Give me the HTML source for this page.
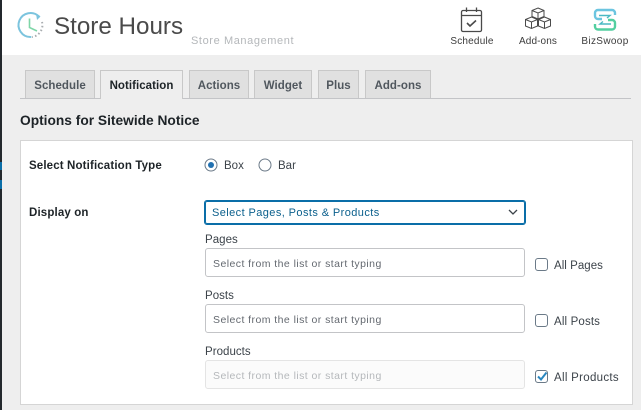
<!DOCTYPE html>
<html><head><meta charset="utf-8">
<style>
html,body{margin:0;padding:0}
body{width:641px;height:410px;overflow:hidden;position:relative;background:#eeeeee;font-family:"Liberation Sans",sans-serif;color:#3c434a}
.a{position:absolute;white-space:nowrap}
.tab{position:absolute;top:70px;height:28px;box-sizing:border-box;border:1px solid #c8c8c8;border-bottom:none;background:#e0e0e0;font-size:11.5px;font-weight:bold;color:#50575e;text-align:center;line-height:30px;letter-spacing:.05px}
.tab.on{background:#eeeeee;color:#1d2327;height:29px;z-index:2}
.lb{font-size:11.5px;font-weight:bold;color:#1d2327;letter-spacing:.14px}
.t{font-size:11.5px;color:#3c434a}
.in{position:absolute;left:205px;width:320px;height:29px;box-sizing:border-box;border:1px solid #c3c4c7;border-radius:3px;background:#fff;font-size:10.5px;color:#646970;line-height:30px;padding-left:7px;letter-spacing:.44px}
.cb{position:absolute;left:535px;width:13px;height:13px;box-sizing:border-box;border:1px solid #6b7a88;border-radius:3px;background:#fff}
.s{font-size:11.500px;line-height:14px;letter-spacing:.04px}
</style></head><body>
<div class="a" style="left:0;top:0;width:2px;height:410px;background:#23282d"></div>
<div class="a" style="left:0;top:162px;width:2px;height:8px;background:#0a6ea8"></div>
<div class="a" style="left:0;top:180px;width:2px;height:9px;background:#0a6ea8"></div>
<div class="a" style="left:2px;top:0;width:639px;height:55px;background:#fff"></div>

<svg class="a" style="left:15px;top:10px" width="30" height="32" viewBox="0 0 30 32" fill="none">
<path d="M24 6.500A12 12 0 1 0 15.500 27" stroke="#7cc4de" stroke-width="2" stroke-linecap="round"/>
<path d="M21 3.500l4.500 3-3.500 3.500z" fill="#7cc4de"/>
<path d="M27 12A12 12 0 0 1 17 27" stroke="#a9adb0" stroke-width="2" stroke-dasharray="1.500 2.400"/>
<path d="M14.500 8.500V17.500L22 21" stroke="#7fd6a8" stroke-width="1.600"/>
</svg>
<div class="a" style="left:54px;top:10px;font-size:24.200px;line-height:34px;color:#4a4a4a">Store Hours</div>
<div class="a" style="left:191px;top:34px;font-size:11px;line-height:14px;color:#b4b7ba;letter-spacing:.6px">Store Management</div>

<svg class="a" style="left:459px;top:6px" width="26" height="28" viewBox="0 0 26 28" fill="none" stroke="#4a4a4a">
<rect x="2.500" y="4.500" width="20" height="21" rx="1.500" stroke-width="1.300"/>
<path d="M2.500 9.500H22.500M7.500 1.500V6M17.500 1.500V6" stroke-width="1.300"/>
<path d="M8 17l3 3 6-5.500" stroke-width="1.600"/>
</svg>
<div class="a" style="left:450px;top:35px;width:44px;text-align:center;font-size:10px;line-height:13px;color:#3c3c3c;letter-spacing:.2px">Schedule</div>

<svg class="a" style="left:523px;top:6px" width="30" height="26" viewBox="0 0 30 26" fill="none" stroke="#4a4a4a" stroke-width="1">
<path d="M15 2l6 2.500v6L15 13l-6-2.500v-6zM9 4.500l6 2.500 6-2.500M15 7v6"/>
<path d="M8.500 11l6 2.500v6.500l-6 2.500-6-2.500v-6.500zM2.500 13.500l6 2.500 6-2.500M8.500 16v6.500"/>
<path d="M21.500 11l6 2.500v6.500l-6 2.500-6-2.500v-6.500zM15.500 13.500l6 2.500 6-2.500M21.500 16v6.500"/>
</svg>
<div class="a" style="left:517px;top:35px;width:42px;text-align:center;font-size:10px;line-height:13px;color:#3c3c3c;letter-spacing:.1px">Add-ons</div>

<svg class="a" style="left:592px;top:8px" width="26" height="24" viewBox="0 0 26 24" fill="none" stroke-width="2.400">
<path d="M23 7V5a3 3 0 0 0-3-3H6a3 3 0 0 0-3 3v3a3 3 0 0 0 3 3h4" stroke="#6cc5e0"/>
<path d="M3 16v2.500a3 3 0 0 0 3 3h14a3 3 0 0 0 3-3V15a3 3 0 0 0-3-3h-4" stroke="#53cfa0"/>
<path d="M7 7.500h11l-3 2.500M19 16H8l3-2.500" stroke="#4ab9c4" stroke-width="1.400"/>
</svg>
<div class="a" style="left:578px;top:35px;width:54px;text-align:center;font-size:10px;line-height:13px;color:#3c3c3c;letter-spacing:.35px">BizSwoop</div>

<div class="a" style="left:20px;top:98px;width:611px;height:1px;background:#c3c4c7"></div>
<div class="tab" style="left:25px;width:70px">Schedule</div>
<div class="tab on" style="left:100px;width:83px">Notification</div>
<div class="tab" style="left:189px;width:60px">Actions</div>
<div class="tab" style="left:254px;width:58px">Widget</div>
<div class="tab" style="left:318px;width:41px">Plus</div>
<div class="tab" style="left:365px;width:66px">Add-ons</div>

<div class="a" style="left:20px;top:113px;font-size:13.750px;line-height:16px;font-weight:bold;color:#1d2327">Options for Sitewide Notice</div>

<div class="a" style="left:20px;top:140px;width:613px;height:265px;box-sizing:border-box;border:1px solid #d5d5d5;background:#fff"></div>

<div class="a lb" style="left:29px;top:159px;line-height:14px">Select Notification Type</div>
<div class="a lb" style="left:29px;top:206px;line-height:14px">Display on</div>

<svg class="a" style="left:204px;top:158px" width="14" height="14" viewBox="0 0 14 14"><circle cx="7" cy="7" r="6" fill="#fff" stroke="#6b7a88"/><circle cx="7" cy="7" r="3" fill="#2271b1"/></svg>
<div class="a t" style="left:224px;top:159px;line-height:14px">Box</div>
<svg class="a" style="left:258px;top:158px" width="14" height="14" viewBox="0 0 14 14"><circle cx="7" cy="7" r="6" fill="#fff" stroke="#6b7a88"/></svg>
<div class="a t" style="left:278px;top:159px;line-height:14px">Bar</div>

<div class="a" style="left:204px;top:200px;width:322px;height:25px;box-sizing:border-box;border:1px solid #0a6ea8;box-shadow:0 0 0 1px #0a6ea8 inset;border-radius:3px;background:#fff;color:#0a5f8c;font-size:11px;line-height:24px;padding-left:7px;letter-spacing:.41px">Select Pages, Posts &amp; Products</div>
<svg class="a" style="left:507px;top:208px" width="12" height="8" viewBox="0 0 12 8" fill="none"><path d="M2 2l4 4 4-4" stroke="#3c434a" stroke-width="1.300"/></svg>

<div class="a t s" style="left:205px;top:233px">Pages</div>
<div class="in" style="top:248px">Select from the list or start typing</div>
<div class="cb" style="top:258px"></div>
<div class="a t s" style="left:554px;top:259px">All Pages</div>

<div class="a t s" style="left:205px;top:289px">Posts</div>
<div class="in" style="top:304px">Select from the list or start typing</div>
<div class="cb" style="top:314px"></div>
<div class="a t s" style="left:554px;top:315px;letter-spacing:.15px">All Posts</div>

<div class="a t s" style="left:205px;top:345px">Products</div>
<div class="in" style="top:360px;border-color:#e4e4e4;background:#fbfbfb;color:#b5b8bb">Select from the list or start typing</div>
<div class="cb" style="top:370px"></div>
<svg class="a" style="left:535px;top:369px" width="14" height="14" viewBox="0 0 14 14" fill="none"><path d="M3 7.500l3 3 5.500-7" stroke="#2a87c0" stroke-width="2"/></svg>
<div class="a t s" style="left:554px;top:371px;letter-spacing:.3px">All Products</div>
</body></html>
